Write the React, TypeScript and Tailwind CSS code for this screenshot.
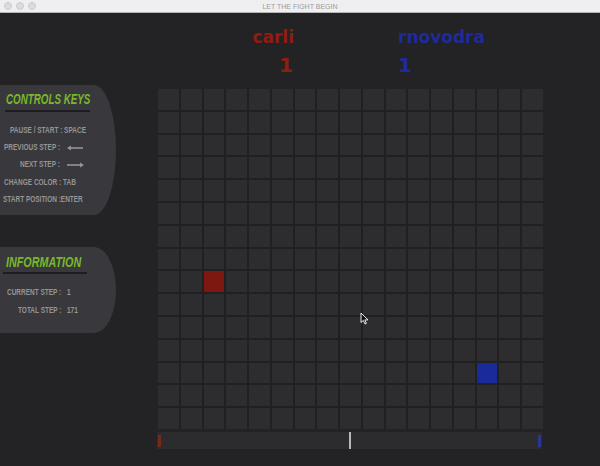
import React from "react";

const COLS = 17;
const ROWS = 15;

function ArrowLeft() {
  return (
    <svg width="16" height="6" viewBox="0 0 16 6" className="block">
      <line x1="2" y1="3" x2="16" y2="3" stroke="#959595" strokeWidth="1.6" />
      <path d="M0 3 L4 0.5 L4 5.5 Z" fill="#959595" />
    </svg>
  );
}

function ArrowRight() {
  return (
    <svg width="17" height="6" viewBox="0 0 17 6" className="block">
      <line x1="0" y1="3" x2="14" y2="3" stroke="#959595" strokeWidth="1.6" />
      <path d="M17 3 L13 0.5 L13 5.5 Z" fill="#959595" />
    </svg>
  );
}

function Txt({ children }: { children: React.ReactNode }) {
  return (
    <span className="inline-block origin-left scale-x-[0.72] whitespace-nowrap">
      {children}
    </span>
  );
}

export default function App() {
  const cells = Array.from({ length: COLS * ROWS }, (_, i) => {
    const r = Math.floor(i / COLS);
    const c = i % COLS;
    let bg = "bg-[#2d2c2f]";
    if (r === 8 && c === 2) bg = "bg-[#7d1811]";
    if (r === 12 && c === 14) bg = "bg-[#1a2a98]";
    return <div key={i} className={bg} />;
  });

  return (
    <div className="relative w-[600px] h-[466px] overflow-hidden flex flex-col bg-[#232225] font-['Liberation_Sans',sans-serif]">
      {/* Title bar */}
      <div className="relative h-[13px] shrink-0 bg-[#efeef0] border-b border-[#b5b4b6] flex items-center justify-center">
        <div className="absolute left-[4px] top-[2px] flex gap-[4px]">
          <div className="w-[8px] h-[8px] rounded-full bg-[#dcdbdd] border border-[#cbcacc]" />
          <div className="w-[8px] h-[8px] rounded-full bg-[#dcdbdd] border border-[#cbcacc]" />
          <div className="w-[8px] h-[8px] rounded-full bg-[#dcdbdd] border border-[#cbcacc]" />
        </div>
        <span className="text-[7px] leading-[7px] text-[#9d9c9e]">LET THE FIGHT BEGIN</span>
      </div>

      {/* Body */}
      <div className="flex flex-1">
        {/* Left column */}
        <div className="w-[157px] shrink-0 flex flex-col pt-[72px]">
          {/* Controls panel */}
          <div className="w-[116px] h-[130px] bg-[#39383c] rounded-tr-[22px_65px] rounded-br-[22px_65px] flex flex-col text-[#959595] text-[9px] font-bold">
            <div className="h-[20px] mt-[4px] pl-[6px] flex items-center">
              <span className="inline-block origin-left scale-x-[0.7] whitespace-nowrap italic font-bold text-[14px] text-[#78b82a]">
                CONTROLS KEYS
              </span>
            </div>
            <div className="ml-[5px] w-[85px] h-[2px] mt-[1px] bg-[#1d1c1f]" />
            <div className="mt-[10px] flex flex-col">
              <div className="h-[17.3px] flex items-center pl-[10px]">
                <Txt>PAUSE / START : SPACE</Txt>
              </div>
              <div className="h-[17.3px] flex items-center pl-[4px]">
                <div className="w-[63px]">
                  <Txt>PREVIOUS STEP :</Txt>
                </div>
                <ArrowLeft />
              </div>
              <div className="h-[17.3px] flex items-center pl-[20px]">
                <div className="w-[47px]">
                  <Txt>NEXT STEP :</Txt>
                </div>
                <ArrowRight />
              </div>
              <div className="h-[17.3px] flex items-center pl-[4px]">
                <Txt>CHANGE COLOR : TAB</Txt>
              </div>
              <div className="h-[17.3px] flex items-center pl-[3px]">
                <Txt>START POSITION :ENTER</Txt>
              </div>
            </div>
          </div>

          {/* Information panel */}
          <div className="mt-[32px] w-[116px] h-[86px] bg-[#39383c] rounded-tr-[22px_43px] rounded-br-[22px_43px] flex flex-col text-[#959595] text-[9px] font-bold">
            <div className="h-[20px] mt-[5px] pl-[6px] flex items-center">
              <span className="inline-block origin-left scale-x-[0.77] whitespace-nowrap italic font-bold text-[14px] text-[#78b82a]">
                INFORMATION
              </span>
            </div>
            <div className="ml-[3px] w-[84px] h-[2px] bg-[#1d1c1f]" />
            <div className="mt-[10px] flex flex-col">
              <div className="h-[18px] flex items-center pl-[7px]">
                <div className="w-[60px]">
                  <Txt>CURRENT STEP :</Txt>
                </div>
                <Txt>1</Txt>
              </div>
              <div className="h-[18px] flex items-center pl-[18px]">
                <div className="w-[49px]">
                  <Txt>TOTAL STEP :</Txt>
                </div>
                <Txt>171</Txt>
              </div>
            </div>
          </div>
        </div>

        {/* Right area */}
        <div className="flex-1 flex flex-col font-['DejaVu_Sans',sans-serif] font-bold">
          <div className="flex pt-[14px]">
            <div className="w-[137px] flex flex-col items-end text-[#8f1d12]">
              <div className="text-[17px] leading-[20px]">carli</div>
              <div className="mt-[6px] text-[20px] leading-[24px] pr-[1px]">1</div>
            </div>
            <div className="ml-[104px] flex flex-col text-[#1f2b9a]">
              <div className="text-[17px] leading-[20px]">rnovodra</div>
              <div className="mt-[6px] text-[20px] leading-[24px]">1</div>
            </div>
          </div>

          <div className="mt-[12px] ml-[1px] w-[385px] h-[340px] grid grid-cols-[repeat(17,1fr)] grid-rows-[repeat(15,1fr)] gap-[2px] bg-[#201f22]">
            {cells}
          </div>

          <div className="mt-[3px] w-[385px] h-[17px] bg-[#2c2b2e] flex items-center justify-between px-[1px]">
            <div className="w-[3px] h-[12px] bg-[#8a2a18] opacity-80" />
            <div className="w-[2px] h-[17px] bg-[#b8b8b8]" />
            <div className="w-[3px] h-[12px] bg-[#2a3aa8] opacity-80" />
          </div>
        </div>
      </div>

      {/* Mouse cursor */}
      <svg
        className="absolute left-[360px] top-[312px]"
        width="9"
        height="13"
        viewBox="0 0 9 13"
      >
        <path d="M1 1 L1 10.5 L3.3 8.4 L5 12 L6.4 11.4 L4.8 7.9 L8 7.9 Z" fill="#111" stroke="#fff" strokeWidth="0.9" />
      </svg>
    </div>
  );
}
